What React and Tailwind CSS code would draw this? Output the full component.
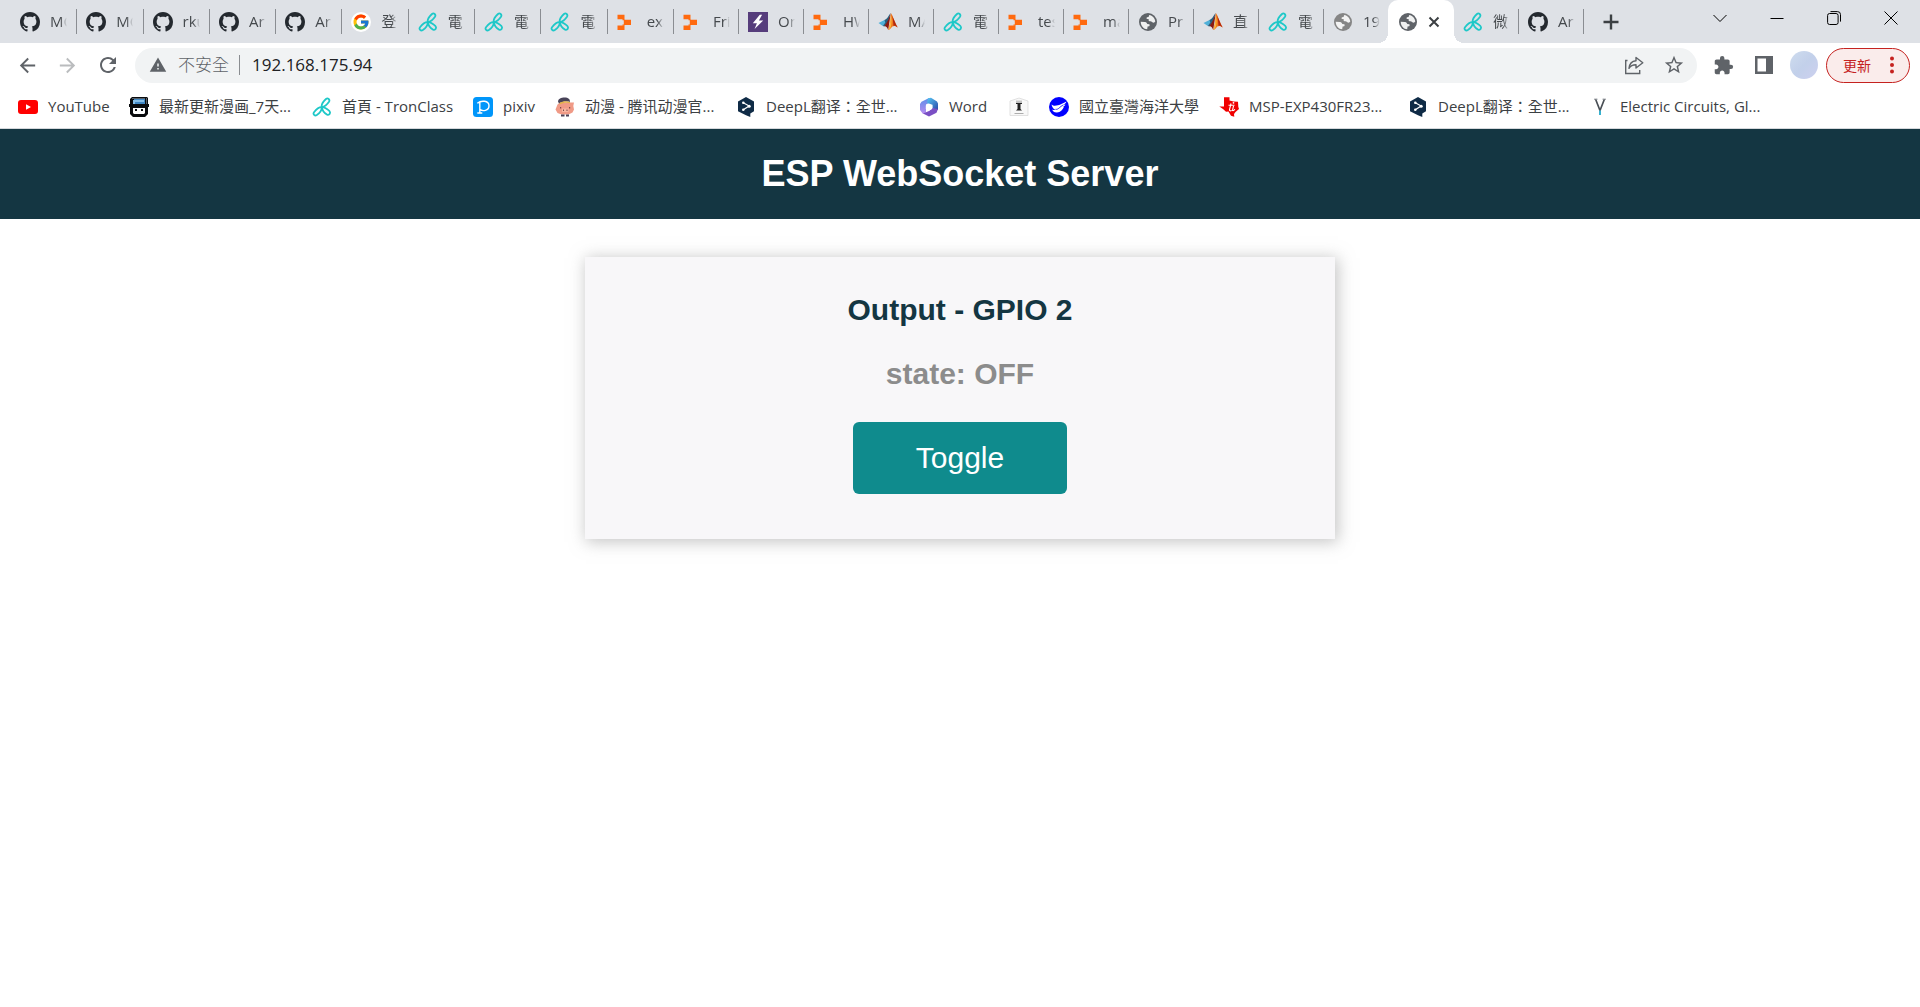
import React, { useState } from "react";
import { FcGoogle } from "react-icons/fc";
import { MdExtension, MdStarBorder, MdWarning, MdRefresh, MdArrowBack, MdArrowForward } from "react-icons/md";

const GITHUB_PATH =
  "M8 0C3.58 0 0 3.58 0 8c0 3.54 2.29 6.53 5.47 7.59.4.07.55-.17.55-.38 0-.19-.01-.82-.01-1.49-2.01.37-2.53-.49-2.69-.94-.09-.23-.48-.94-.82-1.13-.28-.15-.68-.52-.01-.53.63-.01 1.08.58 1.23.82.72 1.21 1.87.87 2.33.66.07-.52.28-.87.51-1.07-1.78-.2-3.64-.89-3.64-3.95 0-.87.31-1.59.82-2.15-.08-.2-.36-1.02.08-2.12 0 0 .67-.21 2.2.82.64-.18 1.32-.27 2-.27s1.36.09 2 .27c1.53-1.04 2.2-.82 2.2-.82.44 1.1.16 1.92.08 2.12.51.56.82 1.27.82 2.15 0 3.07-1.87 3.75-3.65 3.95.29.25.54.73.54 1.48 0 1.07-.01 1.93-.01 2.2 0 .21.15.46.55.38A8.01 8.01 0 0 0 16 8c0-4.42-3.58-8-8-8Z";

function Svg({ box = 20, children }) {
  return (
    <svg aria-hidden="true" viewBox={`0 0 ${box} ${box}`} className="block size-5 shrink-0">
      {children}
    </svg>
  );
}

const Github = () => (
  <Svg box={16}>
    <path fill="#24292f" d={GITHUB_PATH} />
  </Svg>
);

const Google = () => (
  <span className="flex size-5 shrink-0 items-center justify-center rounded-full bg-white">
    <FcGoogle className="size-[18px]" />
  </span>
);

const Tron = () => (
  <Svg>
    <g fill="none" stroke="#1ec8c8" strokeWidth="1.8" strokeLinejoin="round">
      <path d="M9.800 10.200C9 7.500 10.500 5.200 14 2c1.800-1.500 4.300.6 3 2.700C15.200 7.300 12.800 9.500 9.800 10.200Z" />
      <path d="M9.800 10.200C7 10 4.500 12 2 15.200c-1.400 2 .8 4.200 2.800 2.900C8 15.800 9.800 13.500 9.800 10.200Z" />
      <path d="M9.800 10.200c2.400-.3 4.800 1.300 7.500 3.700 1.800 1.900.2 4.600-2.200 3.700C12.300 16.300 10.300 13.500 9.800 10.200Z" />
    </g>
  </Svg>
);

const Blocks = () => (
  <Svg>
    <path fill="#ff6a0f" d="M.5 2.800h7v4.400H.5zM6.800 7.800H14v5.200H6.800zM.5 13.400h7v4.600H.5z" />
    <path fill="#ff6a0f" d="M5.500 7h2v1.200h-2zM5.500 12.500h2v1.200h-2z" />
  </Svg>
);

const Bolt = () => (
  <Svg>
    <path fill="#563d7c" d="M0 0h20v20H0z" />
    <path fill="#fff" d="M11.800 2.800 4.800 11.200h4.100L6.600 17l8.600-8.600h-4.300l3.200-5.600Z" />
  </Svg>
);

const Matlab = () => (
  <Svg>
    <path fill="#4fb0d8" d="m.5 11 6-3 2.500 1-4.200 5Z" />
    <path fill="#28607f" d="M6.500 8C9 7.200 10.300 4.200 12.600 1L10.500 9l-4 5.500-1.700-.5 2.500-3.500Z" />
    <path fill="#8b1a10" d="M12.800 1c-1 2.800-2.600 8-6.300 13 1.900.2 2.900 1.800 3.700 4Z" />
    <path fill="#f07a1e" d="M12.800 1c1.500 1.500 3.500 8.300 6.900 14.500-2.200-1.900-3.800-2-5.300-.9-1.200.9-2.200 3.200-4.200 3.500 1.300-4 2.600-9 2.600-17.100Z" />
    <path fill="#fbb83c" d="M12.800 3c1 3.500 1 7.300.2 11.200-.6 1.600-1.400 3-2.500 3.700 1.300-4.500 2.300-9 2.300-14.900Z" />
    <path fill="#b3270f" d="M13.900 3c1.500 3 3.300 8.300 5.800 12.500-2-1.900-3.300-2-4.200-1.500-.3-4-.7-7.700-1.600-11Z" />
  </Svg>
);

function GlobeBase({ color }) {
  return (
    <Svg>
      <circle cx="10" cy="10" r="9" fill={color} />
      <path fill="#fff" fillOpacity=".9" d="M2.700 9.700 7 9.900c1.500.2 2 1.200 2.300 2.100l2 .2c.6.4.4 1.500-.1 2l-1.600.4-.4 2.700C5.700 17 2.800 14 2.700 9.700Z" />
      <path fill="#fff" fillOpacity=".9" d="M11.300 2.900c3.200.5 5.800 3.300 6 6.600-.7 1.300-1.900 1.400-3 .7-.6-.8-1.500-.9-2.600-.9-1.100-.2-1.500-1.400-.7-2l-1.800-.2c-.9-.5-.8-1.400-.2-1.900l1.600-.3c.2-.9.400-1.500.700-2Z" />
    </Svg>
  );
}
const Globe = () => <GlobeBase color="#5f6368" />;
const GlobePale = () => <GlobeBase color="#858585" />;

const YouTube = () => (
  <Svg>
    <rect y="3" width="20" height="14" rx="3" fill="#f00" />
    <path fill="#fff" d="m8 7.300 5 2.700-5 2.700Z" />
  </Svg>
);

const Manga = () => (
  <Svg>
    <path fill="#0a0c0e" d="M3 0h15l1 1v6h1v3h-1v7l-3 3H4l-3-3v-7H0V7h1V2Z" />
    <path fill="#3f87c4" d="M5 2h11v5H5z" />
    <path fill="#86bfe8" d="M4 3h11v2H6v2H4z" />
    <path fill="#55606a" d="M3 1h13v1H3zM17 1h1v6h-1z" />
    <path fill="#fff" d="M4 11h12v5l-1 1H5l-1-1Z" />
    <path fill="#0a0c0e" d="M6 12h2v2H6zM12 12h2v2h-2z" />
  </Svg>
);

const Pixiv = () => (
  <Svg>
    <rect width="20" height="20" rx="3.500" fill="#0096fa" />
    <path fill="none" stroke="#fff" strokeWidth="1.400" d="M4.300 6.200C8 3.200 16 3.200 16 8.800c0 5.200-6.500 5.800-9.200 3.600M6.800 5v11M4.300 16h5" />
  </Svg>
);

const Piglet = () => (
  <Svg>
    <path fill="#f09a86" d="M2.500 7.500 5 5.500h10.500L19 5.500l-.7 3.500.7 3.500-1.500 3-4 2h-7l-4-1.500L.5 12.500Z" />
    <path fill="#484358" d="M3 4.500C3.500 1.500 6 .5 9.500.5c4 0 5.500 1.500 5.500 4.500-3-1-8-.5-11 1.500Z" />
    <path fill="#e2b24a" d="M4.500 6c3-2 7-2.500 10.500-1v1.300c-3.500-1-7-.5-10 1.200Z" />
    <path fill="#f7b5a0" d="M7 11.500h6.500v3.500H7Z" />
    <path fill="#7e4a48" d="M8 12.500h1V14H8zM11.500 12.500h1V14h-1zM5 10h1.200v1.500H5zM14 10h1.200v1.500H14z" />
    <path fill="#4d4257" d="M6 17.500h3.500v2H6zM11 17.500h3v2h-3z" />
  </Svg>
);

const DeepL = () => (
  <Svg>
    <path fill="#0f2b46" d="m10 0 8 4.500v9.800L14.300 16.500V20L10 18.200l-8-4V4.500Z" />
    <path stroke="#fff" strokeWidth="1.200" fill="none" d="m7.300 5.800 5.800 3.200-5.800 3.800" />
    <g fill="#fff">
      <circle cx="7.300" cy="5.800" r="1.300" />
      <circle cx="13.200" cy="9.200" r="1.500" />
      <circle cx="7.300" cy="12.800" r="1.300" />
    </g>
  </Svg>
);

const Office = () => (
  <Svg>
    <defs>
      <linearGradient id="office-a" x1="0" y1="0" x2="0" y2="1">
        <stop offset="0" stopColor="#5c8fe8" />
        <stop offset="1" stopColor="#b98cf0" />
      </linearGradient>
      <linearGradient id="office-b" x1="0" y1="0" x2="1" y2="1">
        <stop offset="0" stopColor="#56c8f5" />
        <stop offset="1" stopColor="#2a49a8" />
      </linearGradient>
    </defs>
    <path fill="url(#office-a)" d="M10 1 2.500 4.800 1 7v6l3 4 3-1.500V7.500L11 5Z" />
    <path fill="url(#office-b)" d="M9 1.200 12 .8l6 3.700 1 2v6.500l-5.500-1.500V7.800L8 6.200Z" />
    <path fill="#7a4fc4" d="m4 16.500 6 3 7.500-3.800L19 12l-6-1-3 3Z" />
    <path fill="#fff" d="m10 6.500 3.200 1.900v3.500L10 13.700l-3.200-1.800V8.400Z" />
  </Svg>
);

const Shrine = () => (
  <Svg>
    <path fill="#f8f8f8" stroke="#d6d6d6" strokeWidth=".7" d="M1 18.500V4L10 1l9 3v14.500Z" />
    <path fill="#222" d="M7 5.800h6V7h-1.500v5l1.500 1.500H7L8.500 12V7H7Z" />
    <path stroke="#999" strokeWidth=".8" d="M7 4.200h6M5.500 16.500h9" />
  </Svg>
);

const Ocean = () => (
  <Svg>
    <circle cx="10" cy="10" r="10" fill="#00f" />
    <path fill="#fff" d="M2.500 7.500c2 1.700 4 1.300 6.500.8 2.500-.6 5-2.300 8.500-3.800-.8 1.700-1.800 2.600-3 3.200h2c-1 1.300-2 1.800-3 2.100h1.500c-1.500 3-3.500 5.500-7 5.700-3 .1-4.700-1.400-4.700-3 1.300.7 2.200.6 3 .2-2-.9-3.300-2.500-3.800-5.200Z" />
    <path stroke="#00f" strokeWidth=".8" fill="none" d="M6.500 12.300c3 .6 4-2.600 8-4.400" />
  </Svg>
);

const Texas = () => (
  <Svg>
    <path fill="#f00000" d="M5 .3h5.500v3.200l4 1L19 4.700l.3 5 .7 2.300-3.500 3-1.500 2 .3 2.800-3.300-1-2.500-4.300-2.500.3L4 12 .3 9.500H5Z" />
    <path fill="none" stroke="#fff" strokeWidth="1.100" d="m12 6.500-1.500 6c-.3 1.500 1.200 1.800 2 .8M9.500 8.200h6M14.500 9l-1 4.500c1 .4 2-.3 2.300-1.300" />
    <circle cx="14.500" cy="5.800" r=".9" fill="#fff" />
  </Svg>
);

const Volt = () => (
  <Svg>
    <path fill="none" stroke="#4a4f55" strokeWidth="1.700" d="m5.500 2 4.500 11.500L14.500 2" />
    <path stroke="#8a8f94" strokeWidth="1" d="M4 2.200h3.500M12.500 2.200H16" />
    <path stroke="#36b1cf" strokeWidth="2" d="M10 13.500V18" />
  </Svg>
);

const tabsA = [
  [Github, "MO"], [Github, "MO"], [Github, "rku"], [Github, "Ar"], [Github, "Ar"],
  [Google, "登"], [Tron, "電"], [Tron, "電"], [Tron, "電"], [Blocks, "exa"],
];
const tabsB = [
  [Blocks, "Fri"], [Bolt, "On"], [Blocks, "HW"], [Matlab, "MA"], [Tron, "電"], [Blocks, "tes"],
  [Blocks, "ma"], [Globe, "Pr"], [Matlab, "直"], [Tron, "電"], [GlobePale, "19"],
];
const tabsC = [[Tron, "微"], [Github, "Ar"]];

function Tab({ icon: Icon, label, last }) {
  return (
    <button
      type="button"
      role="tab"
      aria-selected="false"
      className={
        "flex min-w-0 flex-1 items-center gap-2.5 pl-[9px] text-[15px] text-[#45494d] " +
        (last ? "" : "border-r border-[#8a8d92]")
      }
    >
      <Icon />
      <span className="w-[17px] overflow-hidden whitespace-nowrap text-left [mask-image:linear-gradient(to_right,black_60%,transparent)]">
        {label}
      </span>
    </button>
  );
}

const bookmarks = [
  [YouTube, "YouTube", "w-[61px]"],
  [Manga, "最新更新漫画_7天...", "w-[133px]"],
  [Tron, "首頁 - TronClass", "w-[111px]"],
  [Pixiv, "pixiv", "w-8"],
  [Piglet, "动漫 - 腾讯动漫官...", "w-[131px]"],
  [DeepL, "DeepL翻译：全世...", "w-[133px]"],
  [Office, "Word", "w-10"],
  [Shrine, "", ""],
  [Ocean, "國立臺灣海洋大學", "w-[120px]"],
  [Texas, "MSP-EXP430FR23...", "w-[139px]"],
  [DeepL, "DeepL翻译：全世...", "w-[132px]"],
  [Volt, "Electric Circuits, Gl...", "w-[145px]"],
];

function TabStrip() {
  return (
    <div role="tablist" className="flex h-[43px] bg-[#dee1e6] pl-[11px]">
      <div className="mt-[9px] flex h-[25px] w-[663px]">
        {tabsA.map(([icon, label], i) => <Tab key={i} icon={icon} label={label} />)}
      </div>
      <div className="mt-[9px] flex h-[25px] w-[714px]">
        {tabsB.map(([icon, label], i) => (
          <Tab key={i} icon={icon} label={label} last={i === tabsB.length - 1} />
        ))}
      </div>
      <div
        role="tab"
        aria-selected="true"
        className="relative flex w-[66px] items-center gap-2.5 rounded-t-[10px] bg-white pl-2.5 before:absolute before:bottom-0 before:-left-[10px] before:size-[10px] before:bg-[radial-gradient(circle_at_0_0,transparent_10px,white_10px)] after:absolute after:bottom-0 after:-right-[10px] after:size-[10px] after:bg-[radial-gradient(circle_at_100%_0,transparent_10px,white_10px)]"
      >
        <Globe />
        <button type="button" aria-label="Close tab" className="text-[#3c4043]">
          <svg viewBox="0 0 12 12" className="size-3"><path d="m1.500 1.500 9 9m0-9-9 9" stroke="currentColor" strokeWidth="2" /></svg>
        </button>
      </div>
      <div className="mt-[9px] flex h-[25px] w-[130px]">
        {tabsC.map(([icon, label], i) => <Tab key={i} icon={icon} label={label} />)}
      </div>
      <button type="button" aria-label="New tab" className="ml-[19px] text-[#3c4043]">
        <svg viewBox="0 0 16 16" className="size-4"><path d="M8 .5v15M.5 8h15" stroke="currentColor" strokeWidth="2.400" /></svg>
      </button>
      <div className="ml-auto flex h-9 pr-px text-black">
        <button type="button" aria-label="Search tabs" className="flex w-[57px] items-center justify-center">
          <svg viewBox="0 0 14 14" className="size-3.5"><path d="m.5 4 6.500 6.500L13.500 4" fill="none" stroke="currentColor" /></svg>
        </button>
        <button type="button" aria-label="Minimize" className="flex w-[57px] items-center justify-center">
          <svg viewBox="0 0 14 14" className="size-3.5"><path d="M.5 7.500h13" stroke="currentColor" /></svg>
        </button>
        <button type="button" aria-label="Restore" className="flex w-[57px] items-center justify-center">
          <svg viewBox="0 0 14 14" className="size-3.5" fill="none" stroke="currentColor">
            <rect x=".6" y="2.500" width="10.500" height="11" rx="2" />
            <path d="M3.500.600h7a3 3 0 0 1 3 3v7" />
          </svg>
        </button>
        <button type="button" aria-label="Close" className="flex w-[57px] items-center justify-center">
          <svg viewBox="0 0 14 14" className="size-3.5"><path d="m.5.5 13 13m0-13-13 13" stroke="currentColor" /></svg>
        </button>
      </div>
    </div>
  );
}

function Toolbar() {
  return (
    <div className="flex h-11 items-center pl-4 pr-2.5 text-[#5f6368]">
      <button type="button" aria-label="Back"><MdArrowBack className="size-[23px]" /></button>
      <button type="button" aria-label="Forward" className="ml-[17px] text-[#babcbe]"><MdArrowForward className="size-[23px]" /></button>
      <button type="button" aria-label="Reload" className="ml-[17px]"><MdRefresh className="size-6" /></button>
      <div className="ml-[15px] flex h-[35px] min-w-0 flex-1 items-center rounded-full bg-[#f1f3f4] pl-3.5 pr-3">
        <MdWarning className="size-[18px] shrink-0" />
        <span className="ml-[11px] whitespace-nowrap text-[17px] font-light">不安全</span>
        <span className="ml-2.5 h-5 w-px shrink-0 bg-[#8a8d91]" />
        <input
          aria-label="Address"
          defaultValue="192.168.175.94"
          className="ml-3 min-w-0 flex-1 bg-transparent text-[17px] text-[#202124] outline-none"
        />
        <button type="button" aria-label="Share">
          <svg viewBox="0 0 20 20" className="size-5" fill="none" stroke="currentColor" strokeWidth="1.400">
            <path d="M3.500 5.500H1.700v13h14V15" />
            <path strokeLinejoin="round" d="M12 2.500l6.800 5.300L12 13v-3.200c-3.500 0-5.500 1-7 3.500.500-4.500 3-7.300 7-7.600Z" />
          </svg>
        </button>
        <button type="button" aria-label="Bookmark this tab" className="ml-[19px]"><MdStarBorder className="size-[22px]" /></button>
      </div>
      <button type="button" aria-label="Extensions" className="ml-4"><MdExtension className="size-[21px]" /></button>
      <button type="button" aria-label="Side panel" className="ml-[21px]">
        <svg viewBox="0 0 18 18" className="size-[18px]"><path fill="currentColor" fillRule="evenodd" d="M0 0h18v18H0ZM2.500 2.500v13H11v-13Z" /></svg>
      </button>
      <button type="button" aria-label="Profile" className="ml-[17px] size-7 rounded-full bg-linear-to-br from-[#cfdcee] via-[#c2d0ea] to-[#cdd0ef]" />
      <button type="button" className="ml-2 flex h-[35px] w-[84px] items-center rounded-full border border-[#c5221f] bg-[#faeceb] pl-4 text-[14px] text-[#c5221f]">
        更新
        <svg aria-hidden="true" viewBox="0 0 4 18" className="ml-[19px] h-[18px] w-1" fill="currentColor">
          <circle cx="2" cy="2.500" r="2" /><circle cx="2" cy="9" r="2" /><circle cx="2" cy="15.500" r="2" />
        </svg>
      </button>
    </div>
  );
}

export default function App() {
  const [on, setOn] = useState(false);
  return (
    <div className="min-h-screen bg-white font-['Open_Sans','Noto_Sans_CJK_TC',sans-serif]">
      <TabStrip />
      <Toolbar />
      <nav aria-label="Bookmarks" className="flex h-[42px] items-center gap-5 overflow-hidden border-b border-[#d5d8dc] pb-0.5 pl-[18px] text-[15px] text-[#3c4043]">
        {bookmarks.map(([Icon, label, width], i) => (
          <a key={i} href="#" aria-label={label || "Bookmark"} className="flex shrink-0 items-center gap-2.5">
            <Icon />
            {label && <span className={"whitespace-nowrap " + width}>{label}</span>}
          </a>
        ))}
      </nav>
      <header className="flex h-[90px] items-center justify-center bg-[#143642] font-['Liberation_Sans',Arial,sans-serif]">
        <h1 className="text-[36px] font-bold text-white">ESP WebSocket Server</h1>
      </header>
      <main className="px-6 pt-[38px] text-center font-['Liberation_Sans',Arial,sans-serif]">
        <section className="mx-auto flex max-w-[750px] flex-col items-center bg-[#f8f7f9] pt-[35px] pb-[45px] shadow-[2px_2px_15px_1px_rgba(140,140,140,0.5)]">
          <h2 className="text-[30px] leading-9 font-bold text-[#143642]">Output - GPIO 2</h2>
          <p className="mt-7 text-[30px] leading-9 font-bold text-[#8c8c8c]">state: {on ? "ON" : "OFF"}</p>
          <button
            type="button"
            onClick={() => setOn(!on)}
            className="mt-[30px] h-[72px] w-[214px] rounded-md bg-[#0f8b8d] pb-0.5 text-[30px] text-white"
          >
            Toggle
          </button>
        </section>
      </main>
    </div>
  );
}
